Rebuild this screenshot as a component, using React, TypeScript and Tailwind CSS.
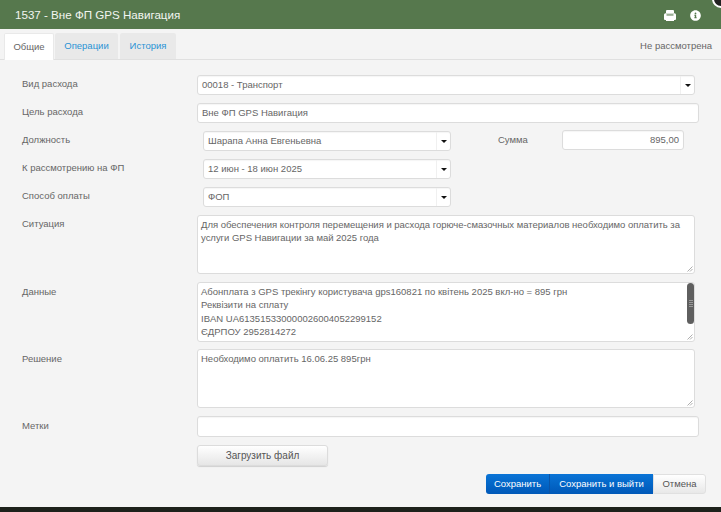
import { FaInfoCircle } from 'react-icons/fa';

const dataText = `Абонплата з GPS трекінгу користувача gps160821 по квітень 2025 вкл-но = 895 грн
Реквізити на сплату
IBAN UA613515330000026004052299152
ЄДРПОУ 2952814272
ФОП Гончарук О.В.`;

const fieldClass = 'h-[20px] bg-white border border-[#dcdcdc] rounded-[3px] flex items-center text-[#666] text-[9.5px] shadow-[inset_0_1px_1px_rgba(0,0,0,0.04)]';
const areaClass = 'block w-[498px] bg-white border border-[#dcdcdc] rounded-[3px] px-[3px] py-[2px] text-[#666] text-[9.5px] leading-[13.4px] outline-none resize-none overflow-hidden';

function Label({ children, className = '' }: { children: string; className?: string }) {
  return <div className={`w-[175px] shrink-0 text-[9.5px] text-[#666] leading-[18px] ${className}`}>{children}</div>;
}

function Caret() {
  return <div className="w-0 h-0 border-x-[3px] border-x-transparent border-t-[3px] border-t-[#111]"></div>;
}

function SelectField({ value, className }: { value: string; className: string }) {
  return (
    <div className={`${fieldClass} ${className}`}>
      <div className="flex-grow pl-[4px]">{value}</div>
      <div className="w-[14px] h-full border-l border-[#f0f0f0] flex items-center justify-center">
        <Caret />
      </div>
    </div>
  );
}

function Grip() {
  return (
    <svg width="6" height="6" viewBox="0 0 6 6" className="absolute right-[2px] bottom-[2px]">
      <path d="M0.5 5.5L5.5 0.5M3 5.5L5.5 3" stroke="#999" strokeWidth="0.8" />
    </svg>
  );
}

function PrintIcon() {
  return (
    <svg width="12" height="11" viewBox="0 0 12 11" className="mr-[14px] mt-[2px]">
      <path d="M3 0h6a1 1 0 0 1 1 1v2H2V1a1 1 0 0 1 1-1z" fill="#fff" />
      <path d="M1.5 3.2h9A1.5 1.5 0 0 1 12 4.7V9a1 1 0 0 1-1 1h-1v1H2v-1H1a1 1 0 0 1-1-1V4.7a1.5 1.5 0 0 1 1.5-1.5z" fill="#fff" />
      <path d="M2.5 4.4h7v1.1h-7z" fill="#56784d" />
    </svg>
  );
}

export default function App() {
  return (
    <div className="w-[721px] h-[512px] overflow-hidden relative bg-[#f4f4f4] font-['Liberation_Sans',Arial,sans-serif]">
      <div className="h-[29px] bg-[#56784d] flex items-center pl-[15px] pr-[20px]">
        <div className="text-[11.6px] text-[#f2f5f0] flex-grow">1537 - Вне ФП GPS Навигация</div>
        <PrintIcon />
        <FaInfoCircle className="text-white text-[11px] mt-[2px]" />
      </div>
      <div className="absolute top-[-10px] right-[-9px] w-[18px] h-[18px] rounded-full bg-[#222] border-2 border-white"></div>

      <div className="h-[31px] pt-[4px] pl-[4px] pr-[9px] flex items-end border-b border-[#e0e0e0]">
        <div className="w-[50px] h-[27px] -mb-px bg-white rounded-t-[2px] border-x border-t border-[#e9e9e9] flex items-center justify-center text-[9.5px] text-[#666]">Общие</div>
        <div className="w-[63px] h-[26px] ml-[1px] bg-[#e9e9e9] rounded-t-[2px] flex items-center justify-center text-[9.5px] text-[#2a93d5]">Операции</div>
        <div className="w-[56px] h-[26px] ml-[2px] bg-[#e9e9e9] rounded-t-[2px] flex items-center justify-center text-[9.5px] text-[#2a93d5]">История</div>
        <div className="ml-auto self-center text-[9.5px] text-[#666]">Не рассмотрена</div>
      </div>

      <div className="pl-[22px] pt-[15px] flex flex-col gap-[8px]">
        <div className="flex">
          <Label>Вид расхода</Label>
          <SelectField value="00018 - Транспорт" className="w-[498px]" />
        </div>
        <div className="flex">
          <Label>Цель расхода</Label>
          <div className={`${fieldClass} w-[502px] px-[4px]`}>Вне ФП GPS Навигация</div>
        </div>
        <div className="flex">
          <Label>Должность</Label>
          <SelectField value="Шарапа Анна Евгеньевна" className="w-[248px] ml-[6px]" />
          <div className="w-[64px] ml-[47px] text-[9.5px] text-[#666] leading-[18px]">Сумма</div>
          <div className={`${fieldClass} w-[122px] -mt-px justify-end px-[4px]`}>895,00</div>
        </div>
        <div className="flex">
          <Label>К рассмотрению на ФП</Label>
          <SelectField value="12 июн - 18 июн 2025" className="w-[248px] ml-[6px]" />
        </div>
        <div className="flex">
          <Label>Способ оплаты</Label>
          <SelectField value="ФОП" className="w-[248px] ml-[6px]" />
        </div>
        <div className="flex">
          <Label>Ситуация</Label>
          <div className="relative">
            <textarea
              readOnly
              className={`${areaClass} h-[59px] tracking-[-0.018px]`}
              value="Для обеспечения контроля перемещения и расхода горюче-смазочных материалов необходимо оплатить за услуги GPS Навигации за май 2025 года"
            />
            <Grip />
          </div>
        </div>
        <div className="flex -mb-px">
          <Label className="pt-px">Данные</Label>
          <div className="relative">
            <textarea readOnly className={`${areaClass} h-[60px]`} value={dataText} />
            <div className="absolute top-[1px] right-[1px] w-[7px] h-[41px] rounded-[4px] bg-[#5f5f5f] flex flex-col items-center justify-center gap-[1px]">
              <div className="w-[4px] h-px bg-[#999]"></div>
              <div className="w-[4px] h-px bg-[#999]"></div>
              <div className="w-[4px] h-px bg-[#999]"></div>
              <div className="w-[4px] h-px bg-[#999]"></div>
            </div>
            <Grip />
          </div>
        </div>
        <div className="flex">
          <Label className="pt-px">Решение</Label>
          <div className="relative">
            <textarea readOnly className={`${areaClass} h-[59px]`} value="Необходимо оплатить 16.06.25 895грн" />
            <Grip />
          </div>
        </div>
        <div className="flex">
          <Label className="pt-px">Метки</Label>
          <div className={`${fieldClass} w-[502px] !h-[21px]`}></div>
        </div>
        <div className="flex">
          <div className="w-[175px] shrink-0"></div>
          <div className="w-[131px] h-[21px] border border-[#dcdcdc] rounded-[3px] bg-gradient-to-b from-white to-[#e6e6e6] shadow-[0_1px_1px_rgba(0,0,0,0.15)] flex items-center justify-center text-[10px] text-[#555]">Загрузить файл</div>
        </div>
      </div>

      <div className="flex justify-end pr-[15px] mt-[8px] text-[9.5px]">
        <div className="w-[64px] h-[20px] rounded-l-[3px] bg-gradient-to-b from-[#0a74d6] to-[#0058b8] border-r border-[#0b55a8] flex items-center justify-center text-white">Сохранить</div>
        <div className="w-[103px] h-[20px] bg-gradient-to-b from-[#0a74d6] to-[#0058b8] flex items-center justify-center text-white">Сохранить и выйти</div>
        <div className="w-[53px] h-[20px] rounded-r-[3px] border border-[#e0e0e0] bg-gradient-to-b from-white to-[#e8e8e8] flex items-center justify-center text-[#555]">Отмена</div>
      </div>

      <div className="absolute left-0 right-0 bottom-0 h-[5px] bg-[#1d211b]"></div>
    </div>
  );
}
